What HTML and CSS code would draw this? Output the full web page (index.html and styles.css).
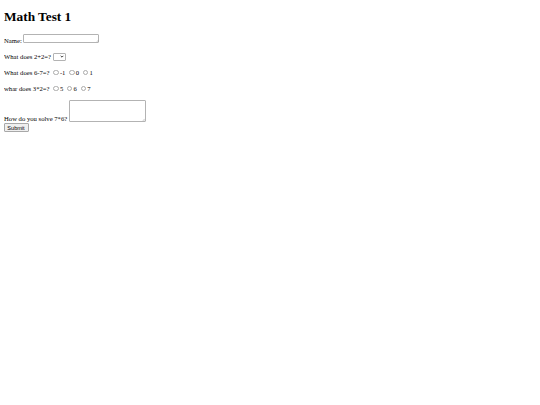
FILE: index.html
```html
<!DOCTYPE html>
<html>
<head>
<meta charset="utf-8">
<link rel="stylesheet" href="styles.css">
</head>
<body>
<h1 class="title">Math Test 1</h1>
<form class="quiz">
  <p class="row">Name: <span class="field field-name"><textarea class="area" rows="1"></textarea><svg class="grip" viewBox="0 0 4 4"><path d="M3.6 1.2 L1.2 3.6 M3.6 2.6 L2.6 3.6"/></svg></span></p>
  <p class="row">What does 2+2=? <span class="field field-select"><select class="pick"></select><svg class="chev" viewBox="0 0 6 4"><path d="M1 1 L3 3 L5 1"/></svg></span></p>
  <p class="row">What does 6-7=? <input class="dot" type="radio" name="q3">-1 <input class="dot" type="radio" name="q3">0 <input class="dot" type="radio" name="q3">1</p>
  <p class="row">whar does 3*2=? <input class="dot" type="radio" name="q4">5 <input class="dot" type="radio" name="q4">6 <input class="dot" type="radio" name="q4">7</p>
  <div class="row-long">How do you solve 7*6? <span class="field field-answer"><textarea class="area"></textarea><svg class="grip" viewBox="0 0 4 4"><path d="M3.6 1.2 L1.2 3.6 M3.6 2.6 L2.6 3.6"/></svg></span></div>
  <button class="send" type="submit">Submit</button>
</form>
</body>
</html>
```
FILE: styles.css
```css
body {
  margin: 4px;
  font-family: "Liberation Serif", "Times New Roman", serif;
  font-size: 6.67px;
  color: #000;
  background: #fff;
}
.title {
  font-size: 13.3px;
  font-weight: bold;
  line-height: normal;
  margin: 4.5px 0 8px;
}
.quiz {
  margin: 0;
}
.row {
  margin: 0;
  line-height: 16px;
  white-space: nowrap;
}
.field {
  position: relative;
  display: inline-block;
  overflow: hidden;
  vertical-align: baseline;
}
.field-name {
  width: 76px;
  height: 8.5px;
}
.field-select {
  width: 13.5px;
  height: 8px;
  vertical-align: -2px;
}
.field-answer {
  width: 77px;
  height: 22px;
}
.area {
  display: block;
  box-sizing: border-box;
  width: 100%;
  height: 100%;
  margin: 0;
  padding: 0;
  border: 1px solid #b3b3b3;
  border-radius: 1px;
  background: #fff;
  resize: none;
}
.grip {
  position: absolute;
  right: 0.5px;
  bottom: 0.5px;
  width: 3px;
  height: 3px;
}
.grip path {
  fill: none;
  stroke: #8a8a8a;
  stroke-width: 0.6;
}
.pick {
  display: block;
  box-sizing: border-box;
  width: 100%;
  height: 100%;
  margin: 0;
  padding: 0;
  border: 1px solid #b3b3b3;
  border-radius: 1px;
  background: #fff;
  appearance: none;
  -webkit-appearance: none;
}
.chev {
  position: absolute;
  right: 2.5px;
  top: 2.5px;
  width: 4px;
  height: 3px;
}
.chev path {
  fill: none;
  stroke: #222;
  stroke-width: 1.3;
}
.dot {
  appearance: none;
  -webkit-appearance: none;
  box-sizing: border-box;
  width: 5.5px;
  height: 5.5px;
  margin: 0 1.2px 0 2px;
  padding: 0;
  border: 1px solid #ababab;
  border-radius: 50%;
  background: #fff;
  vertical-align: -0.5px;
}
.row-long {
  padding-top: 3.25px;
  line-height: 8px;
  white-space: nowrap;
}
.row-long .field {
  vertical-align: -1px;
}
.send {
  display: block;
  box-sizing: border-box;
  width: 25px;
  height: 8.5px;
  margin: 0.5px 0 0 -0.5px;
  padding: 0 2px;
  border: 1px solid #a8a8a8;
  border-radius: 1px;
  background: #efefef;
  font-family: "Liberation Sans", Arial, sans-serif;
  font-size: 5.56px;
  line-height: 6px;
  color: #000;
  text-align: center;
}
```
